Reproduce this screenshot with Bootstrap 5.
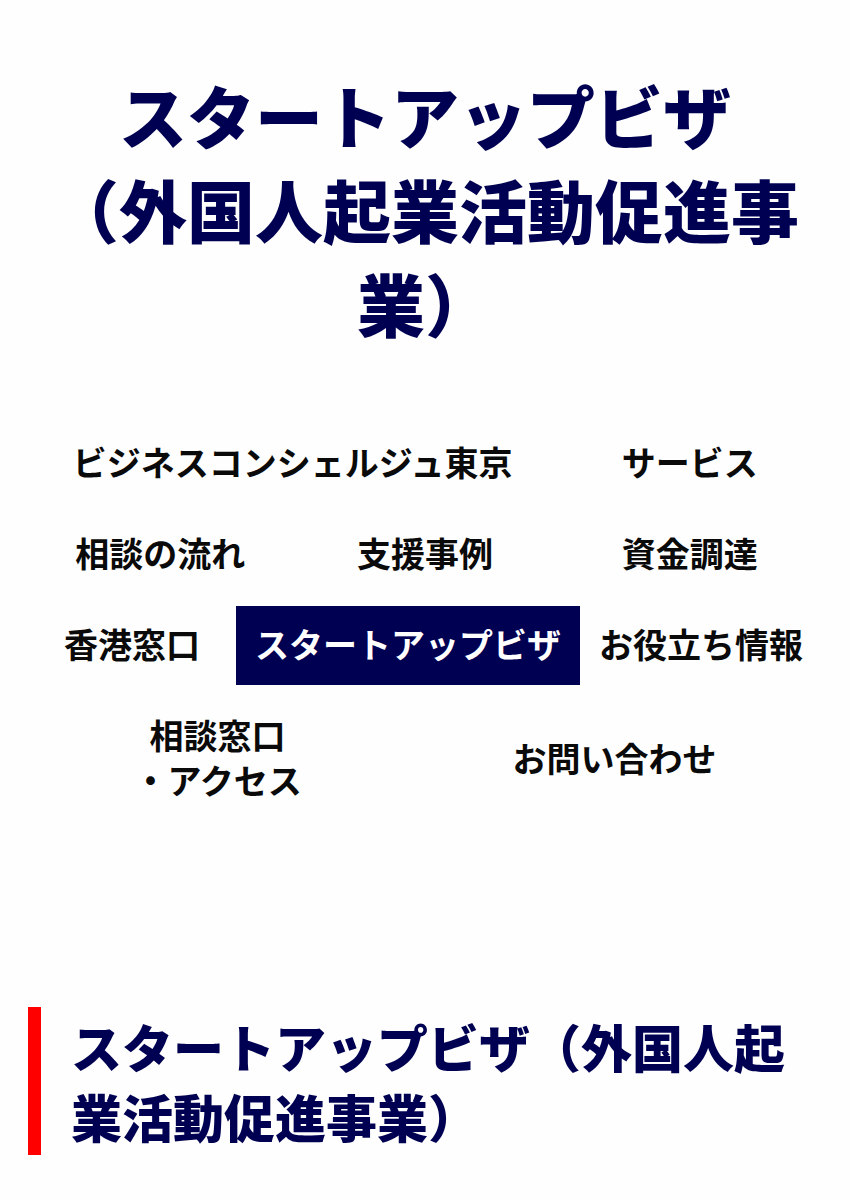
<!DOCTYPE html>
<html lang="ja">
<head>
<meta charset="utf-8">
<meta name="viewport" content="width=device-width, initial-scale=1">
<title>スタートアップビザ（外国人起業活動促進事業）</title>
<link href="https://cdn.jsdelivr.net/npm/bootstrap@5.3.0/dist/css/bootstrap.min.css" rel="stylesheet">
<style>
body{font-family:"Noto Sans CJK JP",sans-serif;background:#fefefe;color:#0a0a0a}
.page-title,.section-title{font-weight:900;color:#000052}
.page-title{font-size:68px;line-height:94px;padding:68px 48px 0}
.site-nav{padding:74px 28px 0}
.nav-rows{row-gap:12px}
.menu-link{display:flex;align-items:center;justify-content:center;padding:15px 0 19px;font-size:34px;line-height:45px;font-weight:700;color:inherit;text-decoration:none;white-space:nowrap;text-align:center}
.menu-link.current,.menu-link.snug{padding-left:19px;padding-right:19px}
.menu-link.current{background:#000052;color:#fff}
.section-title{margin:186px 28px 0;padding:4px 0 4px 30px;border-left:13px solid #f00;font-size:51px;line-height:70px}
</style>
</head>
<body>
<header><h1 class="page-title text-center mb-0">スタートアップビザ<br>（外国人起業活動促進事業）</h1></header>
<nav class="site-nav" aria-label="メインメニュー">
<div class="nav-rows d-flex flex-column">
<div class="row g-0"><a class="menu-link col-8" href="#">ビジネスコンシェルジュ東京</a><a class="menu-link col-4" href="#">サービス</a></div>
<div class="row g-0"><a class="menu-link col-4" href="#">相談の流れ</a><a class="menu-link col-4" href="#">支援事例</a><a class="menu-link col-4" href="#">資金調達</a></div>
<div class="d-flex"><a class="menu-link flex-grow-1" href="#">香港窓口</a><a class="menu-link current" href="#" aria-current="page">スタートアップビザ</a><a class="menu-link snug" href="#">お役立ち情報</a></div>
<div class="d-flex"><a class="menu-link flex-grow-1" href="#">相談窓口<br>・アクセス</a><a class="menu-link flex-grow-1" href="#">お問い合わせ</a></div>
</div>
</nav>
<main><h2 class="section-title mb-0">スタートアップビザ（外国人起業活動促進事業）</h2></main>
<script src="https://cdn.jsdelivr.net/npm/bootstrap@5.3.0/dist/js/bootstrap.bundle.min.js"></script>
</body>
</html>
